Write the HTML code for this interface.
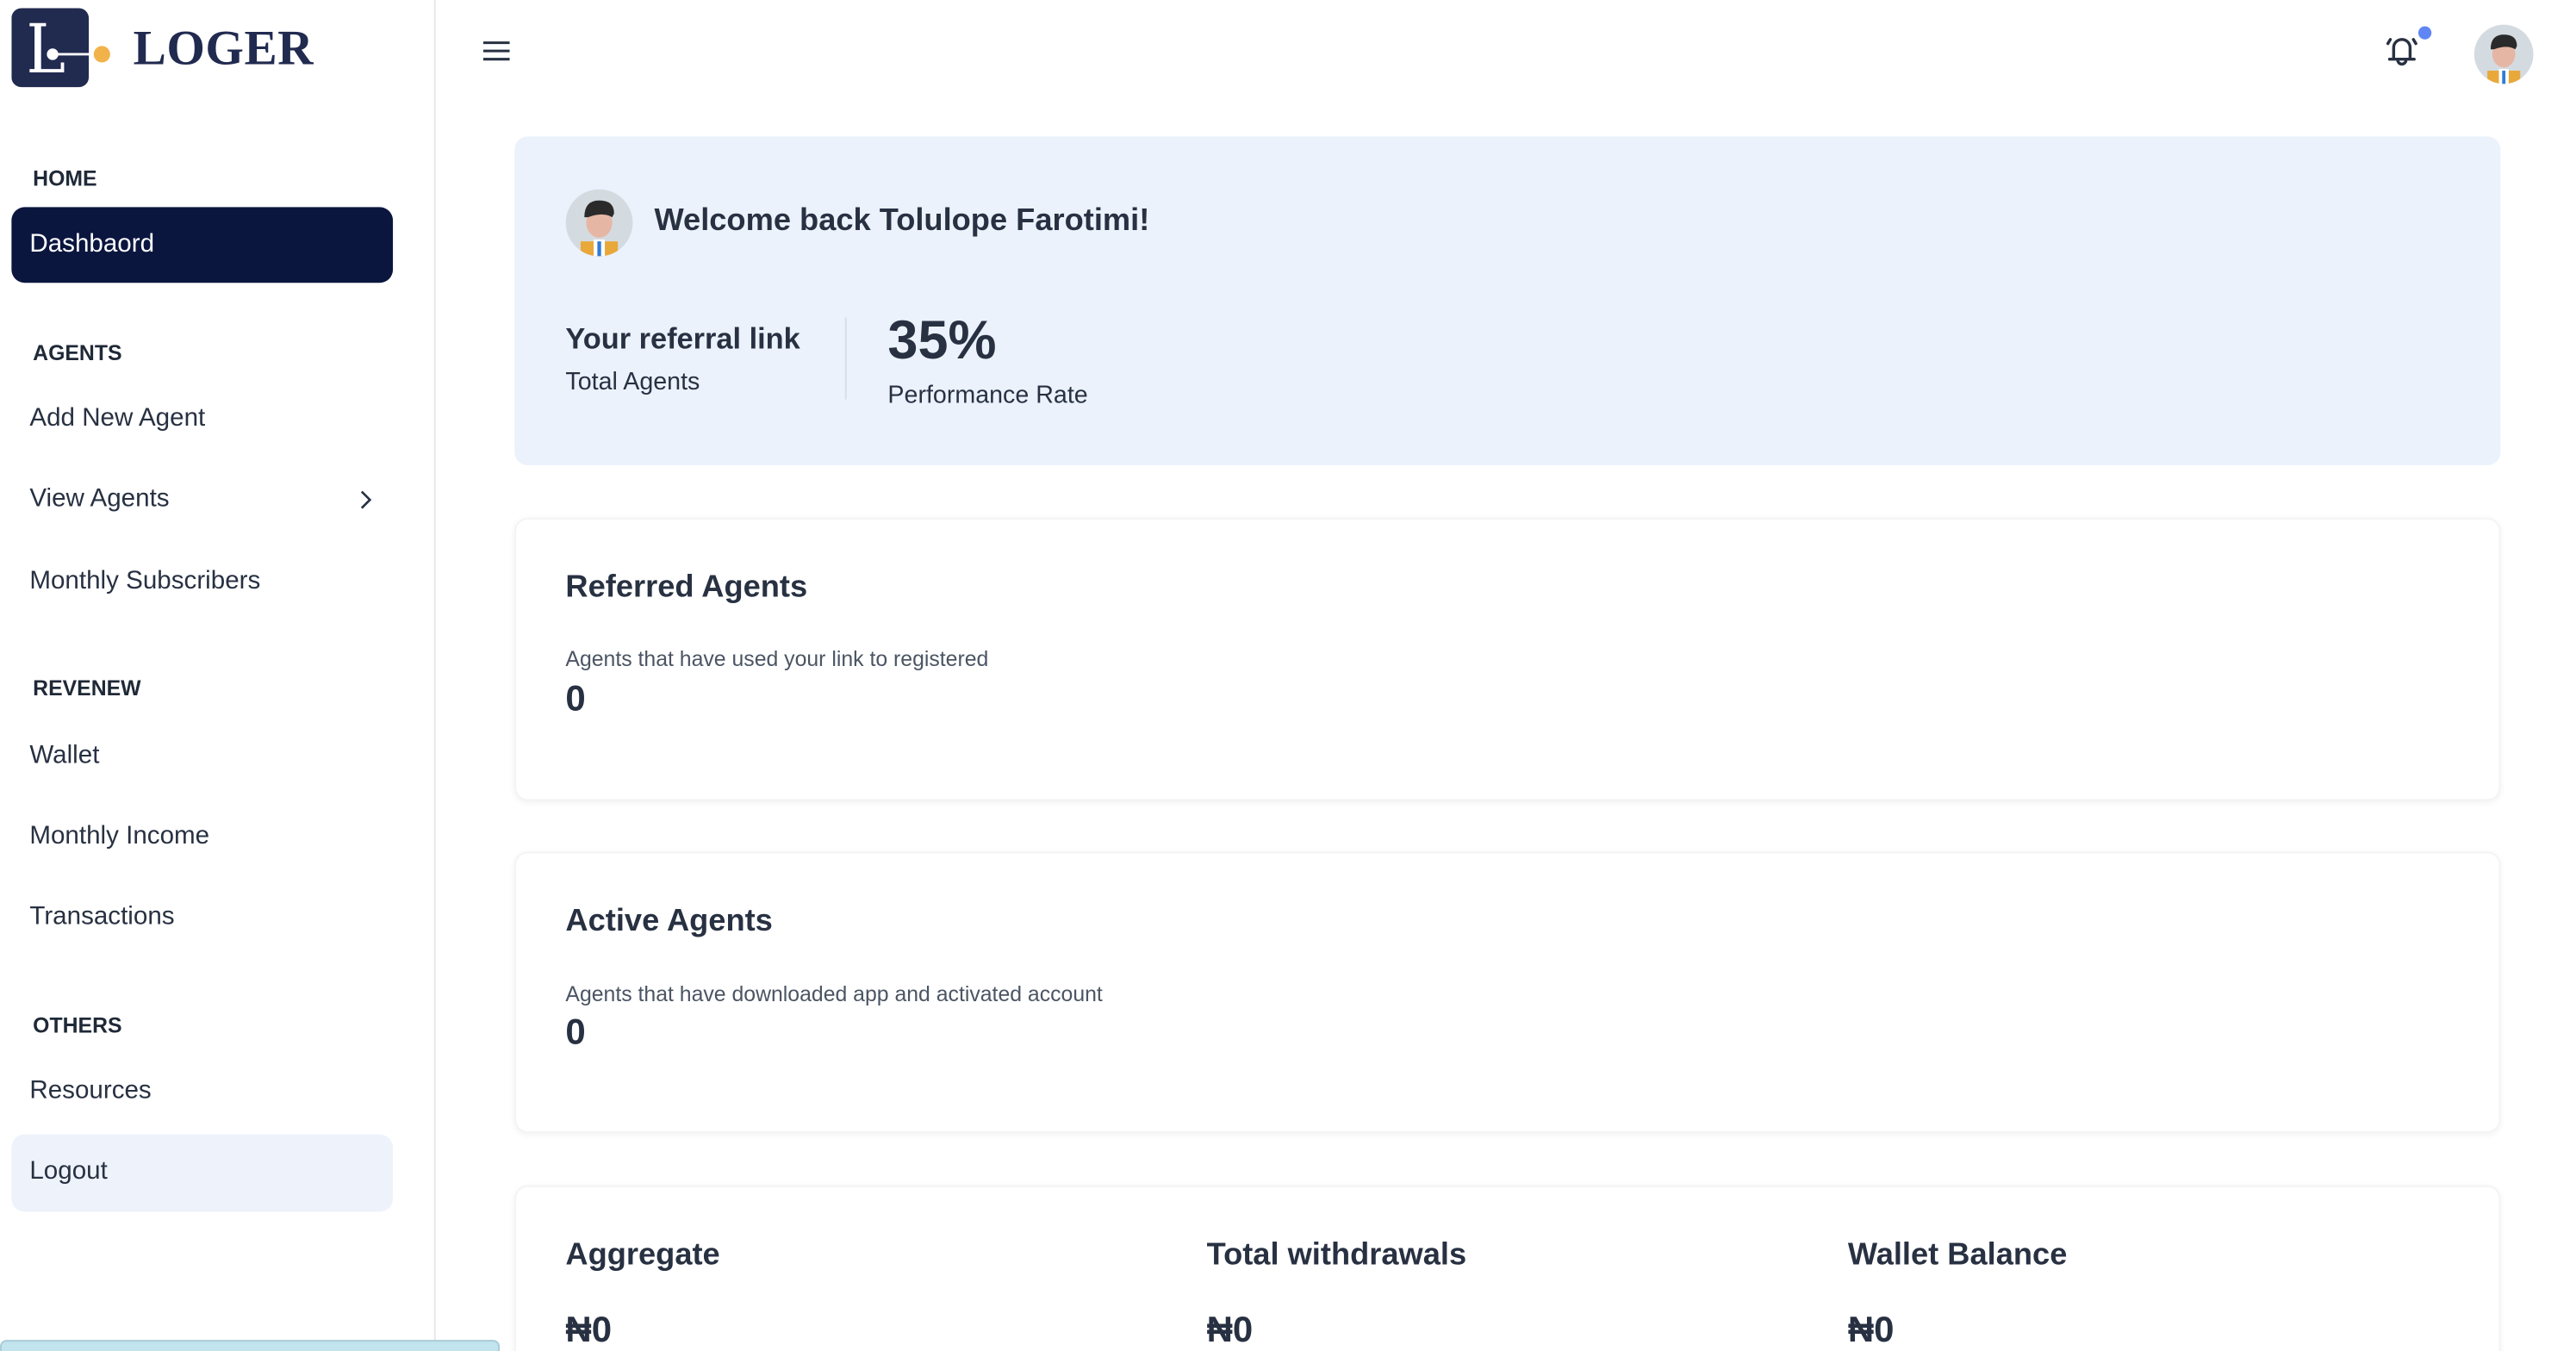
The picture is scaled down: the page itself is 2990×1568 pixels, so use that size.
<!DOCTYPE html>
<html><head><meta charset="utf-8"><style>
*{margin:0;padding:0;box-sizing:border-box}
html,body{width:2990px;height:1568px;overflow:hidden;background:#fff;font-family:"Liberation Sans",sans-serif;color:#283142}
#w{width:1568px;height:822px;transform:scale(1.9082);transform-origin:0 0;position:relative}
.a{position:absolute;white-space:nowrap}
.lbl{font-size:13px;font-weight:700;color:#1f2937;left:20px}
.it{font-size:15.5px;color:#283142;left:18px}
.card{position:absolute;left:313px;width:1208px;background:#fff;border-radius:8px;box-shadow:0 1px 4px rgba(0,0,0,.06);border:1px solid #f3f4f6}
.h{font-size:19px;font-weight:700;color:#283142}
.s{font-size:13px;color:#4b5563}
.n{font-size:22px;font-weight:700;color:#283142}
</style></head><body><div id="w">
<div class="a" style="left:264px;top:0;width:1px;height:822px;background:#e5e7eb"></div>
<svg class="a" style="left:7px;top:5px" width="64" height="50" viewBox="0 0 64 50">
<rect x="0" y="0" width="47" height="48" rx="6" fill="#212a4f"/>
<path d="M11 9h10v2h-3v26h12v-4h2v6H11v-2h3V11h-3z" fill="#fff"/>
<circle cx="25" cy="28" r="3.5" fill="#fff"/><line x1="25" y1="28" x2="50" y2="28" stroke="#fff" stroke-width="1.5"/>
<circle cx="55" cy="28" r="5" fill="#f2b24a"/></svg>
<div class="a" style="left:81px;top:13px;font-family:'Liberation Serif',serif;font-size:30px;font-weight:700;color:#212a4f;letter-spacing:.3px">LOGER</div>
<div class="a lbl" style="top:101px">HOME</div>
<div class="a" style="left:7px;top:126px;width:232px;height:46px;background:#0b163f;border-radius:8px"></div>
<div class="a it" style="top:140px;color:#fff">Dashbaord</div>
<div class="a lbl" style="top:207px">AGENTS</div>
<div class="a it" style="top:246px">Add New Agent</div>
<div class="a it" style="top:295px">View Agents</div>
<svg class="a" style="left:216px;top:297px" width="12" height="14"><path d="M4 2l5 5-5 5" stroke="#283142" stroke-width="1.4" fill="none"/></svg>
<div class="a it" style="top:345px">Monthly Subscribers</div>
<div class="a lbl" style="top:411px">REVENEW</div>
<div class="a it" style="top:451px">Wallet</div>
<div class="a it" style="top:500px">Monthly Income</div>
<div class="a it" style="top:549px">Transactions</div>
<div class="a lbl" style="top:616px">OTHERS</div>
<div class="a it" style="top:655px">Resources</div>
<div class="a" style="left:7px;top:690px;width:232px;height:47px;background:#eef2fb;border-radius:8px"></div>
<div class="a it" style="top:704px">Logout</div>
<div class="a" style="left:0;top:815px;width:304px;height:10px;background:#c2e4ee;border-radius:4px 4px 0 0;border:1px solid #a9ccd6"></div>
<svg class="a" style="left:293px;top:23px" width="18" height="16"><path d="M1 3h16M1 8h16M1 13h16" stroke="#283142" stroke-width="1.6"/></svg>
<svg class="a" style="left:1450px;top:14px" width="32" height="28" viewBox="0 0 32 28"><path d="M3.5 22h15M6 22v-7a5 5 0 0 1 10 0v7M8.5 22.5a2.5 2.5 0 0 0 5 0M4 10l-1.5 2.5M18 10l1.5 2.5" stroke="#283142" stroke-width="1.8" fill="none" stroke-linecap="round" stroke-linejoin="round"/><circle cx="25" cy="6" r="4" fill="#6086f5"/></svg>
<svg class="a" style="left:1504px;top:14px" width="38" height="38" viewBox="0 0 38 38"><defs><clipPath id="c1"><circle cx="19" cy="19" r="18"/></clipPath></defs><g clip-path="url(#c1)"><rect width="38" height="38" fill="#d4dbe0"/><rect x="9" y="29" width="20" height="12" fill="#e9a83a"/><rect x="16" y="28" width="6" height="12" fill="#fff"/><rect x="18" y="29" width="2" height="10" fill="#2f7ad8"/><ellipse cx="19" cy="19" rx="7" ry="8" fill="#e6b6a4"/><path d="M11 16q0-9 8-9t8 7l-1 2q-5-3-13 0z" fill="#2a2a2a"/></g></svg>
<div class="a" style="left:313px;top:83px;width:1208px;height:200px;background:#ebf2fc;border-radius:8px"></div>
<svg class="a" style="left:343px;top:114px" width="43" height="43" viewBox="0 0 38 38"><defs><clipPath id="c2"><circle cx="19" cy="19" r="18"/></clipPath></defs><g clip-path="url(#c2)"><rect width="38" height="38" fill="#d4dbe0"/><rect x="9" y="29" width="20" height="12" fill="#e9a83a"/><rect x="16" y="28" width="6" height="12" fill="#fff"/><rect x="18" y="29" width="2" height="10" fill="#2f7ad8"/><ellipse cx="19" cy="19" rx="7" ry="8" fill="#e6b6a4"/><path d="M11 16q0-9 8-9t8 7l-1 2q-5-3-13 0z" fill="#2a2a2a"/></g></svg>
<div class="a" style="left:398px;top:124px;font-size:19px;font-weight:700">Welcome back Tolulope Farotimi!</div>
<div class="a" style="left:344px;top:196px;font-size:18px;font-weight:700">Your referral link</div>
<div class="a" style="left:344px;top:224px;font-size:15px">Total Agents</div>
<div class="a" style="left:514px;top:193px;width:1px;height:50px;background:#d6deea"></div>
<div class="a" style="left:540px;top:188px;font-size:33px;font-weight:700">35%</div>
<div class="a" style="left:540px;top:232px;font-size:15px">Performance Rate</div>
<div class="card" style="top:315px;height:172px"></div>
<div class="a h" style="left:344px;top:347px">Referred Agents</div>
<div class="a s" style="left:344px;top:393px">Agents that have used your link to registered</div>
<div class="a n" style="left:344px;top:412px">0</div>
<div class="card" style="top:518px;height:171px"></div>
<div class="a h" style="left:344px;top:550px">Active Agents</div>
<div class="a s" style="left:344px;top:597px">Agents that have downloaded app and activated account</div>
<div class="a n" style="left:344px;top:615px">0</div>
<div class="card" style="top:721px;height:120px"></div>
<div class="a h" style="left:344px;top:753px">Aggregate</div>
<div class="a h" style="left:734px;top:753px">Total withdrawals</div>
<div class="a h" style="left:1124px;top:753px">Wallet Balance</div>
<div class="a n" style="left:344px;top:796px">₦0</div>
<div class="a n" style="left:734px;top:796px">₦0</div>
<div class="a n" style="left:1124px;top:796px">₦0</div>
</div></body></html>
